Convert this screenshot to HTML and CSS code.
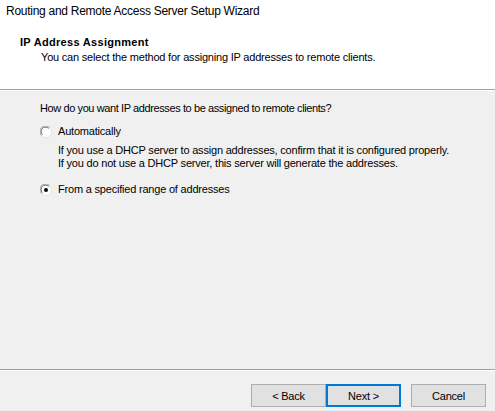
FILE: index.html
```html
<!DOCTYPE html>
<html>
<head>
<meta charset="utf-8">
<link rel="stylesheet" href="styles.css">
</head>
<body>
<div class="window">
  <div class="top">
    <div class="titlebar">Routing and Remote Access Server Setup Wizard</div>
    <div class="header">
      <div class="h-title">IP Address Assignment</div>
      <div class="h-sub">You can select the method for assigning IP addresses to remote clients.</div>
    </div>
  </div>
  <div class="sep"></div>
  <div class="body">
    <div class="question">How do you want IP addresses to be assigned to remote clients?</div>
    <div class="option">
      <svg class="radio" width="12" height="12" viewBox="0 0 12 12">
        <circle cx="6" cy="6" r="5.5" fill="#fff" stroke="#e3e3e3"/>
        <path d="M1.5 9.5 A5 5 0 0 1 9.5 1.5" fill="none" stroke="#a0a0a0" stroke-width="1"/>
        <path d="M2.4 8.6 A4 4 0 0 1 8.6 2.4" fill="none" stroke="#696969" stroke-width="1"/>
      </svg>
      <span>Automatically</span>
    </div>
    <div class="desc">If you use a DHCP server to assign addresses, confirm that it is configured properly.<br>If you do not use a DHCP server, this server will generate the addresses.</div>
    <div class="option second">
      <svg class="radio" width="12" height="12" viewBox="0 0 12 12">
        <circle cx="6" cy="6" r="5.5" fill="#fff" stroke="#e3e3e3"/>
        <path d="M1.5 9.5 A5 5 0 0 1 9.5 1.5" fill="none" stroke="#a0a0a0" stroke-width="1"/>
        <path d="M2.4 8.6 A4 4 0 0 1 8.6 2.4" fill="none" stroke="#696969" stroke-width="1"/>
        <circle cx="6" cy="6" r="2" fill="#000"/>
      </svg>
      <span>From a specified range of addresses</span>
    </div>
  </div>
  <div class="sep"></div>
  <div class="footer">
    <button class="btn">&lt; Back</button>
    <button class="btn default">Next &gt;</button>
    <button class="btn cancel">Cancel</button>
  </div>
</div>
</body>
</html>
```
FILE: styles.css
```css
html, body {
  margin: 0;
  padding: 0;
}
body {
  width: 495px;
  height: 411px;
  overflow: hidden;
  font-family: "Liberation Sans", Arial, sans-serif;
  font-size: 11px;
  letter-spacing: -0.2px;
  color: #000;
  background: #f0f0f0;
}
.window {
  display: flex;
  flex-direction: column;
  height: 411px;
}
.top {
  background: #fff;
  height: 89px;
}
.titlebar {
  font-size: 12px;
  letter-spacing: -0.27px;
  line-height: 14px;
  padding: 4px 0 0 6px;
  height: 26px;
  box-sizing: border-box;
}
.header {
  padding: 10px 0 0 20px;
}
.h-title {
  font-weight: bold;
  letter-spacing: 0.3px;
  line-height: 13px;
}
.h-sub {
  padding-left: 21px;
  line-height: 13px;
  margin-top: 2px;
}
.sep {
  height: 1px;
  background: #a0a0a0;
  border-bottom: 1px solid #fff;
}
.body {
  height: 278px;
  padding: 10px 0 0 40px;
  box-sizing: border-box;
  line-height: 13px;
}
.question {
  margin-top: 1px;
  letter-spacing: -0.4px;
}
.option {
  display: flex;
  align-items: center;
  gap: 6px;
  margin-top: 10px;
}
.option.second {
  margin-top: 13px;
}
.radio {
  flex: none;
}
.desc {
  margin: 6px 0 0 18px;
}
.footer {
  flex: 1;
  display: flex;
  padding: 13px 0 0 251px;
  box-sizing: border-box;
}
.btn {
  width: 75px;
  height: 23px;
  box-sizing: border-box;
  background: #e1e1e1;
  border: 1px solid #adadad;
  font-family: "Liberation Sans", Arial, sans-serif;
  font-size: 11px;
  letter-spacing: -0.2px;
  color: #000;
  padding: 0;
  margin: 0;
}
.btn.default {
  border: 2px solid #0078d7;
}
.btn.cancel {
  margin-left: 10px;
}
```
